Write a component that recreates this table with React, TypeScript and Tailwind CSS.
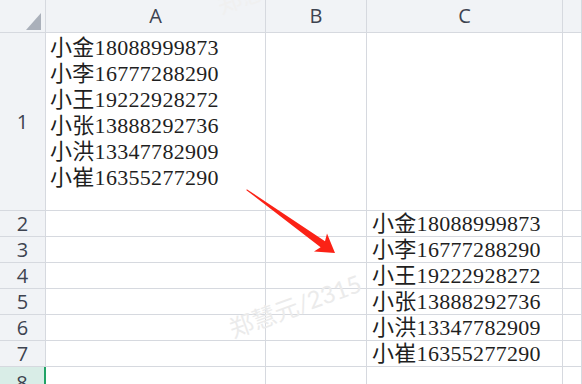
import React from "react";

// ─── Sheet data ────────────────────────────────────────────────────────────
const PEOPLE = [
  "小金18088999873",
  "小李16777288290",
  "小王19222928272",
  "小张13888292736",
  "小洪13347782909",
  "小崔16355277290",
];

const CELL_FONT = { fontFamily: '"Liberation Serif", "Noto Sans CJK SC", serif' };
const MARK_FONT = { fontFamily: '"Lato", "Noto Sans CJK SC", sans-serif' };

const HEAD = "bg-[#f1f3f6] text-[#3d4350] text-[20px] flex items-center justify-center border-r border-b border-[#d6d9df]";
const CELL = "bg-white border-r border-b border-[#d6d9df]";

function Corner() {
  return (
    <div className={`${HEAD} relative`}>
      <svg width="46" height="33" className="absolute inset-0">
        <polygon points="41,13 41,30 26,30" fill="#aab0ba" />
      </svg>
    </div>
  );
}

function Arrow() {
  return (
    <svg width="582" height="384" className="absolute inset-0 pointer-events-none">
      <polygon
        points="246.8,189.2 325,241.2 327,233.5 335,253 314,251.4 320.6,247.2 246.4,190.2"
        fill="#fb2216"
      />
    </svg>
  );
}

export default function App() {
  const rows = [2, 3, 4, 5, 6, 7];
  return (
    <div
      className="relative w-[582px] h-[384px] overflow-hidden bg-white"
      style={{ fontFamily: '"Open Sans", "Noto Sans", sans-serif' }}
    >
      <div className="grid grid-cols-[46px_220px_101px_196px_1fr] grid-rows-[33px_178px_26px_26px_26px_26px_26px_26px_26px]">
        {/* ── Column headers ── */}
        <Corner />
        <div className={HEAD}>A</div>
        <div className={HEAD}>B</div>
        <div className={HEAD}>C</div>
        <div className={HEAD} />

        {/* ── Row 1 ── */}
        <div className={HEAD}>1</div>
        <div
          className={`${CELL} pl-[4px] pt-[2px] text-[22px] leading-[26px] tracking-[0.3px] text-[#1f1f1f]`}
          style={CELL_FONT}
        >
          {PEOPLE.map((p) => (
            <div key={p}>{p}</div>
          ))}
        </div>
        <div className={CELL} />
        <div className={CELL} />
        <div className={CELL} />

        {/* ── Rows 2-7 ── */}
        {rows.map((r, i) => (
          <React.Fragment key={r}>
            <div className={HEAD}>{r}</div>
            <div className={CELL} />
            <div className={CELL} />
            <div
              className={`${CELL} pl-[5px] text-[22px] leading-[25px] tracking-[0.3px] text-[#1f1f1f] whitespace-nowrap`}
              style={CELL_FONT}
            >
              {PEOPLE[i]}
            </div>
            <div className={CELL} />
          </React.Fragment>
        ))}

        {/* ── Row 8 (selected) ── */}
        <div className="bg-[#d9ede7] text-[#3d4350] text-[20px] flex items-start justify-center pt-[1px] border-r-2 border-[#21a366]">
          8
        </div>
        <div className={CELL} />
        <div className={CELL} />
        <div className={CELL} />
        <div className={CELL} />
      </div>

      <Arrow />

      {/* ── Watermarks ── */}
      <div
        className="absolute left-[226px] top-[288px] text-[24px] text-[#ebebeb] -rotate-[20deg] whitespace-nowrap pointer-events-none"
        style={MARK_FONT}
      >
        郑慧元/2315
      </div>
      <div
        className="absolute -left-[60px] -top-[34px] text-[24px] text-[#f0f0f0] -rotate-[20deg] whitespace-nowrap pointer-events-none"
        style={MARK_FONT}
      >
        郑慧元/2315
      </div>
      <div
        className="absolute left-[214px] -top-[36px] text-[24px] text-[#f0f0f0] -rotate-[20deg] whitespace-nowrap pointer-events-none"
        style={MARK_FONT}
      >
        郑慧元/2315
      </div>
    </div>
  );
}
